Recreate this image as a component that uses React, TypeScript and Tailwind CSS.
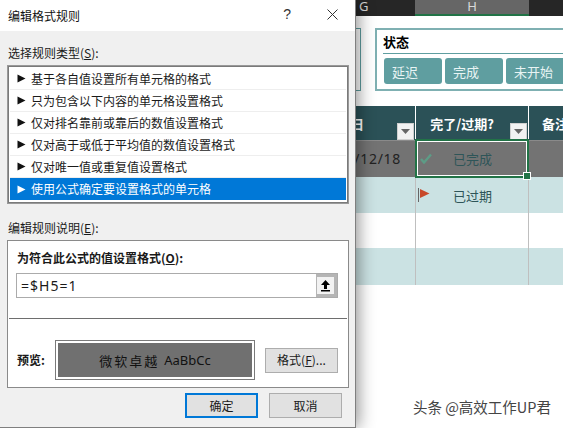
import React from "react";

const font = { fontFamily: '"Noto Sans CJK SC", "Noto Sans", sans-serif' };

const rules = [
  "基于各自值设置所有单元格的格式",
  "只为包含以下内容的单元格设置格式",
  "仅对排名靠前或靠后的数值设置格式",
  "仅对高于或低于平均值的数值设置格式",
  "仅对唯一值或重复值设置格式",
  "使用公式确定要设置格式的单元格",
];

function Arrow({ fill }: { fill: string }) {
  return (
    <svg width="9" height="9" viewBox="0 0 9 9" className="shrink-0">
      <path d="M0.5 0.5 L8.5 4.5 L0.5 8.5 Z" fill={fill} />
    </svg>
  );
}

function FilterButton() {
  return (
    <div className="w-[17px] h-[17px] bg-[#f2f2f2] border border-[#d0d0d0] flex items-center justify-center">
      <svg width="9" height="5" viewBox="0 0 9 5">
        <path d="M0 0 H9 L4.5 5 Z" fill="#666666" />
      </svg>
    </div>
  );
}

function Dialog() {
  return (
    <div className="relative z-10 w-[356px] h-[428px] shrink-0 bg-[#f0f0f0] border-r border-b border-[#7f7f7f] shadow-[2px_0_16px_rgba(0,0,0,0.45)] flex flex-col text-[12px] leading-none text-[#1a1a1a]">
      <div className="h-[31px] bg-white flex items-center pl-[8px] shrink-0">
        <span className="text-[12px] flex-1 text-[#111111]">编辑格式规则</span>
        <span className="text-[14px] mr-[36px] mb-[3px] text-[#333333]" style={{ fontFamily: '"Liberation Sans", sans-serif' }}>?</span>
        <svg width="11" height="11" viewBox="0 0 11 11" className="mr-[17px] mb-[3px]">
          <path d="M0.5 0.5 L10.5 10.5 M10.5 0.5 L0.5 10.5" stroke="#333333" strokeWidth="1" fill="none" />
        </svg>
      </div>
      <div className="pl-[8px] pt-[16px] h-[34px] shrink-0">
        选择规则类型(<span className="underline">S</span>):
      </div>
      <div className="ml-[7px] w-[342px] h-[139px] shrink-0 bg-white border-2 border-[#7a7a7a] p-[1px] flex flex-col outline outline-1 -outline-offset-1 outline-[#999999]">
        {rules.map((r, i) => (
          <div
            key={r}
            className={
              i === 5
                ? "h-[22px] flex items-center gap-[5px] pl-[7px] bg-[#0078d7] text-white"
                : "h-[22px] flex items-center gap-[5px] pl-[7px] border-b border-[#eeeeee]"
            }
          >
            <Arrow fill={i === 5 ? "#ffffff" : "#111111"} />
            <span>{r}</span>
          </div>
        ))}
      </div>
      <div className="pl-[8px] pt-[18px] h-[36px] shrink-0">
        编辑规则说明(<span className="underline">E</span>):
      </div>
      <div className="ml-[7px] w-[342px] h-[148px] shrink-0 bg-white border border-[#8a8a8a] flex flex-col">
        <div className="pl-[9px] pt-[11px] h-[32px] font-bold shrink-0">
          为符合此公式的值设置格式(<span className="underline">O</span>):
        </div>
        <div className="ml-[8px] w-[322px] h-[25px] shrink-0 border border-[#ababab] flex">
          <div className="flex-1 flex items-center pl-[4px] text-[14px] tracking-[1px]" style={{ fontFamily: '"Noto Sans", sans-serif' }}>=$H5=1</div>
          <div className="w-[21px] border-[3px] border-l-[1px] border-[#b5b5b5] bg-[#f2f2f2] flex items-center justify-center">
            <svg width="11" height="12" viewBox="0 0 11 12">
              <path d="M5.5 0 L10 5 H7 V9 H4 V5 H1 Z M1 10 H10 V11.5 H1 Z" fill="#000000" />
            </svg>
          </div>
        </div>
        <div className="mt-[20px] mx-[1px] h-[1px] bg-[#6e6e6e] shrink-0" />
        <div className="flex items-center pl-[9px] mt-[21px]">
          <span className="font-bold w-[38px]">预览:</span>
          <div className="w-[200px] h-[40px] border border-[#7a7a7a] p-[2px] bg-white">
            <div className="w-full h-full bg-[#707070] flex items-center justify-center gap-[5px] text-[#111111]">
              <span className="text-[13px] tracking-[2px]">微软卓越</span>
              <span className="text-[13px]" style={{ fontFamily: '"Noto Sans", sans-serif' }}>AaBbCc</span>
            </div>
          </div>
          <div className="ml-[10px] w-[73px] h-[25px] bg-[#e1e1e1] border border-[#adadad] flex items-center justify-center">
            格式(<span className="underline">F</span>)...
          </div>
        </div>
      </div>
      <div className="flex ml-[185px] mt-[5px] gap-[11px]">
        <div className="w-[73px] h-[25px] bg-[#e1e1e1] border-2 border-[#0078d7] flex items-center justify-center">确定</div>
        <div className="w-[73px] h-[25px] bg-[#e1e1e1] border border-[#adadad] flex items-center justify-center">取消</div>
      </div>
    </div>
  );
}

function Slicer() {
  return (
    <div className="h-[90px] flex items-start pt-[12px] bg-white shrink-0">
      <div className="w-[5px] h-[63px] border-y border-r border-[#5f9ea0]" />
      <div className="ml-[14px] flex-1 h-[63px] border-l-2 border-y-2 border-[#7fb0b2] pl-[6px] overflow-hidden">
        <div className="h-[24px] flex items-center font-bold text-[13px] text-black border-b border-[#5f9ea0]">状态</div>
        <div className="flex gap-[3px] mt-[4px] ml-[1px]">
          <div className="w-[58px] h-[26px] bg-[#5f9ea0] rounded-[3px] text-[#e8f4f4] text-[13px] flex items-center pl-[8px] shrink-0">延迟</div>
          <div className="w-[58px] h-[26px] bg-[#5f9ea0] rounded-[3px] text-[#e8f4f4] text-[13px] flex items-center pl-[8px] shrink-0">完成</div>
          <div className="w-[62px] h-[26px] bg-[#5f9ea0] rounded-[3px] text-[#e8f4f4] text-[13px] flex items-center pl-[8px] shrink-0">未开始</div>
        </div>
      </div>
    </div>
  );
}

function Sheet() {
  const teal = "bg-[#cbe2e3]";
  return (
    <div className="relative flex-1 min-w-0 h-[428px] bg-white flex flex-col overflow-hidden text-[13px] leading-none">
      <div className="h-[16px] bg-[#262626] grid grid-cols-[59px_114px_1fr] shrink-0 text-[#d9d9d9]">
        <div className="pl-[3px] text-[13px] leading-[13px]" style={{ fontFamily: '"Noto Sans", sans-serif' }}>G</div>
        <div className="bg-[#666666] border-b-2 border-[#217346] text-center text-[13px] leading-[13px]" style={{ fontFamily: '"Noto Sans", sans-serif' }}>H</div>
        <div />
      </div>
      <Slicer />
      <div className="h-[34px] bg-[#2b5157] grid grid-cols-[59px_114px_1fr] text-white font-bold shrink-0">
        <div className="relative flex items-center text-[13px]">
          <span className="-ml-[5px]">日</span>
          <div className="absolute right-[1px] bottom-0"><FilterButton /></div>
        </div>
        <div className="relative border-x border-white flex items-center justify-center pr-[20px]">
          完了/过期?
          <div className="absolute right-[1px] bottom-0"><FilterButton /></div>
        </div>
        <div className="flex items-center pl-[13px] whitespace-nowrap">备注</div>
      </div>
      <div className="h-[37px] bg-[#737373] border-t border-[#8a8a8a] grid grid-cols-[59px_114px_1fr] shrink-0 text-[#222222]">
        <div className="flex items-center justify-end pr-[14px] pb-[1px] whitespace-nowrap text-[14px] tracking-[0.7px]" style={{ fontFamily: '"Noto Sans", sans-serif' }}>/12/18</div>
        <div className="relative border-2 border-[#217346] -mt-[2px] h-[39px]">
          <div className="h-full border border-white flex items-center pl-[2px]">
            <svg width="12" height="11" viewBox="0 0 12 11" className="shrink-0">
              <path d="M1 6 L4 9.5 L11 1.5" stroke="#5d9c86" strokeWidth="2.4" fill="none" />
            </svg>
            <span className="ml-[21px] text-[#2e5558]">已完成</span>
          </div>
          <div className="absolute -right-[3px] -bottom-[3px] w-[6px] h-[6px] bg-[#217346] border border-white box-content -m-[1px]" />
        </div>
        <div />
      </div>
      <div className={`h-[36px] ${teal} grid grid-cols-[59px_114px_1fr] shrink-0`}>
        <div />
        <div className="border-x border-[#bfbfbf] flex items-center text-[#2e5558]">
          <svg width="12" height="14" viewBox="0 0 12 14" className="shrink-0 ml-[2px]">
            <path d="M0.5 0 V14" stroke="#666666" strokeWidth="1" />
            <path d="M2 1 L11.5 5.5 L2 10 Z" fill="#c8492a" />
          </svg>
          <span className="ml-[23px]">已过期</span>
        </div>
        <div />
      </div>
      <div className="h-[35px] bg-white grid grid-cols-[59px_114px_1fr] shrink-0">
        <div />
        <div className="border-x border-[#bfbfbf]" />
        <div />
      </div>
      <div className={`h-[37px] ${teal} grid grid-cols-[59px_114px_1fr] shrink-0`}>
        <div />
        <div className="border-x border-[#bfbfbf]" />
        <div />
      </div>
      <div className="flex-1 flex items-end justify-end pr-[12px] pb-[14px]">
        <span className="text-[14.5px] text-[#444444] whitespace-nowrap [text-shadow:0_0_2px_#ffffff]">头条 @高效工作UP君</span>
      </div>
    </div>
  );
}

export default function App() {
  return (
    <div className="w-[563px] h-[428px] flex overflow-hidden bg-white" style={font}>
      <Dialog />
      <Sheet />
    </div>
  );
}
